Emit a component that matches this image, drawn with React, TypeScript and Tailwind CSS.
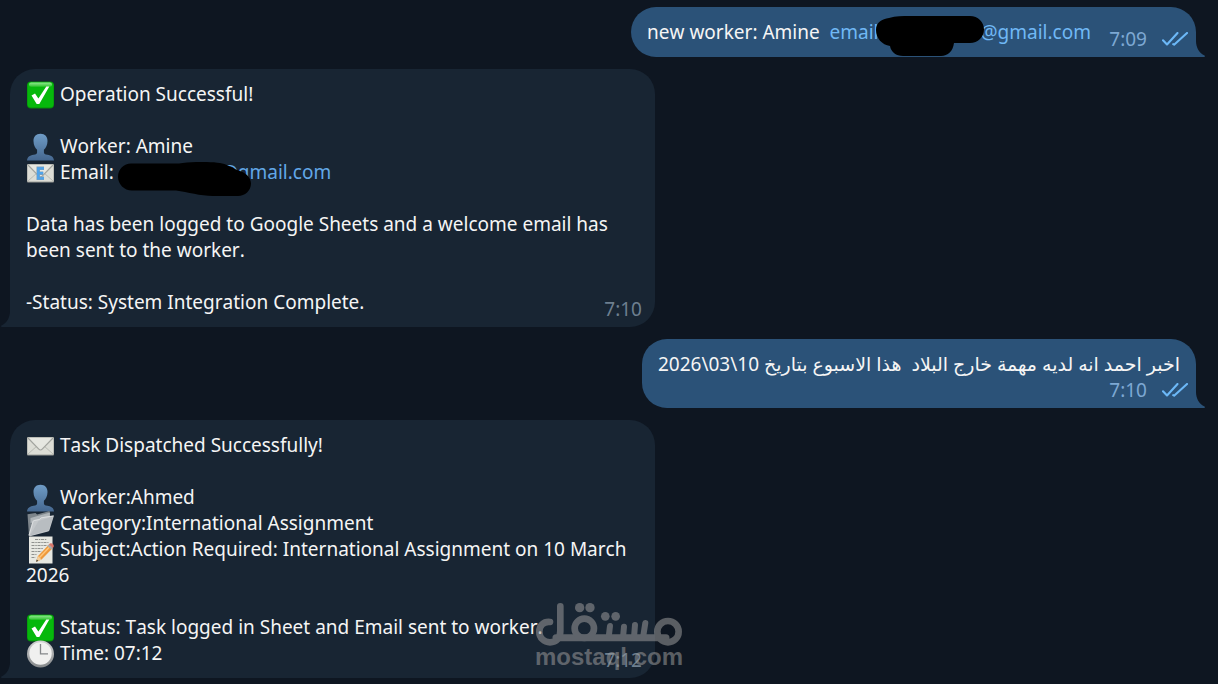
import type { ReactNode } from 'react';
import clsx from 'clsx';

const emojiClass = 'inline-block w-7 h-7 -mt-[10px] -mb-2 mr-px align-middle';

function CheckMarkEmoji() {
  return (
    <svg className={emojiClass} viewBox="0 -1 28 28" role="img" aria-label="check mark">
      <defs>
        <linearGradient id="check-shine" x1="0" y1="0" x2="0" y2="1">
          <stop offset="0" stopColor="#8fe88f" />
          <stop offset="1" stopColor="#2fc42f" />
        </linearGradient>
      </defs>
      <rect x="1" y="-0.500" width="27" height="27" rx="4" fill="#078a0b" />
      <rect x="1.500" y="0" width="26" height="25.500" rx="3.500" fill="#06b80c" />
      <rect x="3" y="0.500" width="23" height="4.300" rx="2.100" fill="url(#check-shine)" />
      <path d="M5.500 13.600 9 11.600l3.400 5L20.300 4.400l3 .1L13.300 22h-2.600z" fill="#fff" />
    </svg>
  );
}

function PersonEmoji() {
  return (
    <svg className={emojiClass} viewBox="0 0 28 28" role="img" aria-label="person">
      <defs>
        <linearGradient id="person-fill" x1="0" y1="0" x2="0" y2="1">
          <stop offset="0" stopColor="#6f9cc6" />
          <stop offset="1" stopColor="#45678f" />
        </linearGradient>
      </defs>
      <path
        d="M14.500 0.800c4.500 0 7.200 3 7 7.500-.1 3.800-1.600 6.800-3.600 8.500v2.600c0 1.300 1 1.800 3.500 2.400 4 .9 6.300 2 6.600 5.700H1c.3-3.700 2.600-4.800 6.600-5.700 2.500-.6 3.500-1.100 3.500-2.400v-2.600c-2-1.700-3.500-4.700-3.600-8.500-.2-4.500 2.500-7.500 7-7.500z"
        fill="url(#person-fill)"
      />
    </svg>
  );
}

function EnvelopeEmoji({ email = false }: { email?: boolean }) {
  return (
    <svg className={emojiClass} viewBox="0 0 28 28" role="img" aria-label={email ? 'e-mail' : 'envelope'}>
      <rect x="1" y="5" width="27" height="18.500" rx="1" fill="#9a9c98" />
      <rect x="1.500" y="5.400" width="26" height="17.200" rx="0.800" fill="#dcddd6" />
      <path d="M2 22 11.500 13.500M27 22l-9.500-8.500" stroke="#b9bbb4" strokeWidth="1" fill="none" />
      <path d="M2 6l10.800 11.200c1 1 2.400 1 3.400 0L27 6" stroke="#a2a49f" strokeWidth="1.200" fill="#e6e7e1" />
      {email && (
        <g fill="none">
          <path d="M18 9.300h-5.800v10h5.800M12.200 14.200h5" stroke="#7f9fba" strokeWidth="3.400" />
          <path d="M18 9.300h-5.800v10h5.800M12.200 14.200h5" stroke="#4fa3ea" strokeWidth="2.300" />
        </g>
      )}
    </svg>
  );
}

function FolderEmoji() {
  return (
    <svg className={emojiClass} viewBox="0 0 28 28" role="img" aria-label="folder">
      <path d="M1.500 4.200 9.500 3l1.600 1.400L23.500 1l.8 5.500-2 14L3 26z" fill="#7d858b" />
      <path d="M4.500 8 24 2.600l-.4 6L4.500 13z" fill="#aeb4b8" />
      <path d="M4 26.300 2.600 25 6.500 11.500c.3-1 .8-1.400 1.700-1.600l5-.9 2-1.700L28 5.400 23.500 20c-.3.900-.7 1.300-1.500 1.500z" fill="#c3c7ca" />
      <path d="M4 25.500 12.500 11l14.500-4.500-4.200 13.300z" fill="#b0b6ba" opacity="0.600" />
      <path d="M3 25.500 7 11.600c.3-.7.700-1 1.400-1.100l5-1 2-1.700 12-1.900" fill="none" stroke="#e8eaeb" strokeWidth="0.700" />
    </svg>
  );
}

function MemoEmoji() {
  return (
    <svg className={emojiClass} viewBox="0 0 28 28" role="img" aria-label="memo">
      <rect x="3" y="0.500" width="23.500" height="27" fill="#e7e8e2" />
      <g stroke="#8f918e" strokeWidth="1" strokeDasharray="3 0.800 1.500 0.700">
        <path d="M9 3.500h12M5.500 6.500h17M5.500 9.500h16M5.500 12.500h12M5.500 15.500h10M5.500 18.500h5M5.500 21.500h4" />
      </g>
      <path d="M10 25.800 12 20l11-11.500 3.800 3.600-11.200 11.400z" fill="#ee9a3c" />
      <path d="m13.500 21.500 11-11.400" stroke="#ffc67a" strokeWidth="1.500" />
      <path d="M10 25.800 12 20l3.600 3.500z" fill="#f2cf9f" />
      <path d="m10 25.800.8-2.300 1.500 1.400z" fill="#333" />
      <path d="m21.500 10 1.400-1.500 3.800 3.600-1.500 1.500z" fill="#a7abb0" />
      <path d="m22.900 8.500 1-.900c1.800-1.400 4.800 1.200 3.700 3.500l-.9 1z" fill="#d9776c" />
    </svg>
  );
}

function ClockEmoji() {
  return (
    <svg className={emojiClass} viewBox="0 0 28 28" role="img" aria-label="clock">
      <defs>
        <linearGradient id="clock-rim" x1="0" y1="0" x2="0" y2="1">
          <stop offset="0" stopColor="#d2d3d3" />
          <stop offset="1" stopColor="#85888a" />
        </linearGradient>
      </defs>
      <circle cx="14.500" cy="14" r="13.500" fill="url(#clock-rim)" />
      <circle cx="14.500" cy="13.500" r="11.200" fill="#f0f0ef" />
      <path d="M14.500 4v9.800h7.500" stroke="#84878a" strokeWidth="1.300" fill="none" />
    </svg>
  );
}

function ReadTicks() {
  return (
    <svg className="w-[26px] h-[14px]" viewBox="0 0 26 14" fill="none" stroke="#6cb8f7" strokeWidth="2.100" strokeLinecap="round" strokeLinejoin="round" role="img" aria-label="Read">
      <path d="M1 8.300 5 12.500 15.500 1" />
      <path d="M11.200 12.200l.9.500L25 1" />
    </svg>
  );
}

type BubbleProps = {
  time: string;
  outgoing?: boolean;
  ownLine?: boolean; // time goes under the text instead of beside its last line
  children: ReactNode;
};

function Bubble({ time, outgoing = false, ownLine = false, children }: BubbleProps) {
  return (
    <article
      className={clsx(
        'relative pt-3 pb-[5px] rounded-t-[25px]',
        outgoing
          ? 'self-end mr-3 rounded-bl-[25px] bg-[#2b5278]'
          : 'w-full max-w-[645px] rounded-br-[25px] bg-[#182533]',
      )}
    >
      <div className="px-4">{children}</div>
      <footer
        className={clsx(
          'flex items-center justify-end',
          outgoing ? 'gap-[15px] pr-2 text-[#7da8d3]' : 'pr-[13px] text-[#6d7f8f]',
          !ownLine && '-mt-[19px]',
        )}
      >
        <time>{time}</time>
        {outgoing && <ReadTicks />}
      </footer>
      <svg
        className={clsx(
          'absolute bottom-0 w-[9px] h-4',
          outgoing ? 'left-full text-[#2b5278]' : 'right-full -scale-x-100 text-[#182533]',
        )}
        viewBox="0 0 9 16"
        fill="currentColor"
        aria-hidden="true"
      >
        <path d="M0 0c0 7 3.500 12 8.500 14.600.8.500.5 1.400-.5 1.400H0z" />
      </svg>
    </article>
  );
}

function Watermark() {
  return (
    <div className="absolute bottom-[15px] left-1/2 -translate-x-1/2 flex flex-col items-center text-[#999] opacity-55 pointer-events-none">
      <svg className="w-[146px] h-[43px] overflow-visible" viewBox="0 0 438 129" fill="none" stroke="currentColor" strokeWidth="20" strokeLinecap="round" aria-hidden="true">
        <path d="M42 60C22 58 10 72 10 89c0 18 14 32 32 32 20 0 31-14 31-34V13" />
        <path d="M60 107H390" strokeWidth="21" />
        <circle cx="145" cy="79" r="29" />
        <path d="M222 72l-4 35M264 74l-3 33M297 69l-3 38M328 63l-7 44" strokeWidth="18" />
        <circle cx="396" cy="89" r="32" />
        <g fill="currentColor" stroke="none">
          <circle cx="131" cy="17" r="14" />
          <circle cx="162" cy="17" r="14" />
          <circle cx="208" cy="43" r="13" />
          <circle cx="239" cy="43" r="13" />
        </g>
      </svg>
      <span className="font-['Liberation_Sans',Arial,sans-serif] font-bold text-2xl leading-6">mostaql.com</span>
    </div>
  );
}

export default function App() {
  return (
    <main className="relative min-h-screen overflow-hidden bg-[#0e1621] px-[10px] pt-[7px] pb-[6px] flex flex-col gap-3 font-['Noto_Sans','DejaVu_Sans',sans-serif] [font-kerning:none] text-[19px] leading-[26px] text-[#f5f5f5]">
      <Bubble time="7:09" outgoing>
        <p className="pr-[89px]">
          new worker: Amine&nbsp;{' '}
          <a href="mailto:" className="text-[#70b8f5]">
            email
            <span className="relative inline-block w-[102px]">
              <svg className="absolute -left-[3px] -bottom-[17px] w-[108px] h-10" viewBox="0 0 108 40" aria-hidden="true">
                <path d="M0 14C0 6 6 3 13 2 20 0 26 0 34 0h60c8 0 14 6 14 13.500S102 27 94 27H78c-1 8-6 13-13 13H27c-7 0-12-4-13-10C6 29 0 22 0 14z" />
              </svg>
            </span>
            @gmail.com
          </a>
        </p>
      </Bubble>

      <Bubble time="7:10">
        <p><CheckMarkEmoji /> Operation Successful!</p>
        <br />
        <p><PersonEmoji /> Worker: Amine</p>
        <p>
          <EnvelopeEmoji email /> Email:{' '}
          <a href="mailto:" className="text-[#62a8e8]">
            <span className="inline-block w-[102px]" />
            <span className="relative">
              @gmail.com
              <svg className="absolute right-[80px] -bottom-[11px] w-[133px] h-[34px]" viewBox="0 0 133 34" aria-hidden="true">
                <path d="M0 15C0 7 6 1.500 13 1.500h48C72-.5 92-.5 102 1c6 1 11 4 17 7 8 2 14 7 14 13.500 0 7-6 12.500-13 12.500H95c-13 0-25-4-37-5.500H14C6 28.500 0 22 0 15z" />
              </svg>
            </span>
          </a>
        </p>
        <br />
        <p>Data has been logged to Google Sheets and a welcome email has been sent to the worker.</p>
        <br />
        <p>-Status: System Integration Complete.</p>
      </Bubble>

      <Bubble time="7:10" outgoing ownLine>
        <p dir="rtl" lang="ar">
          اخبر احمد انه لديه مهمة خارج البلاد&nbsp; هذا الاسبوع بتاريخ <bdi dir="ltr">2026\03\10</bdi>
        </p>
      </Bubble>

      <Bubble time="7:12">
        <p><EnvelopeEmoji /> Task Dispatched Successfully!</p>
        <br />
        <p><PersonEmoji /> Worker:Ahmed</p>
        <p><FolderEmoji /> Category:International Assignment</p>
        <p><MemoEmoji /> Subject:Action Required: International Assignment on 10 March 2026</p>
        <br />
        <p><CheckMarkEmoji /> Status: Task logged in Sheet and Email sent to worker.</p>
        <p><ClockEmoji /> Time: 07:12</p>
      </Bubble>

      <Watermark />
    </main>
  );
}
